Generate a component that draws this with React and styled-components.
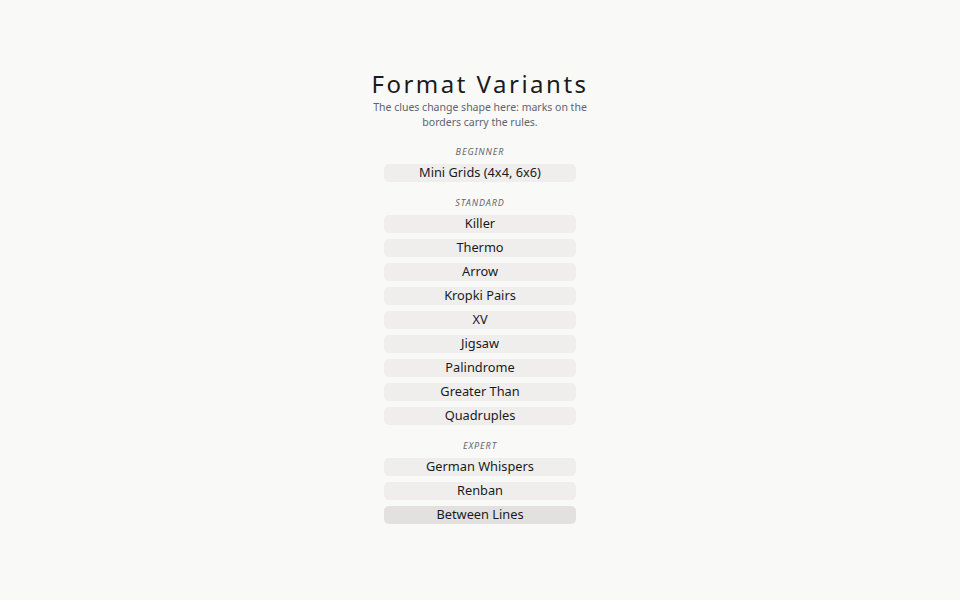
import React from 'react';
import styled, { createGlobalStyle } from 'styled-components';

const Global = createGlobalStyle`
  html, body {
    margin: 0;
    padding: 0;
    background: #f9f9f8;
    font-family: "Noto Sans", "Open Sans", sans-serif;
    color: #1d1d1f;
  }
`;

const Page = styled.main`
  display: flex;
  flex-direction: column;
  align-items: center;
  padding-top: 69px;
`;

const Title = styled.h1`
  margin: 0;
  font-size: 24px;
  line-height: 30px;
  font-weight: 400;
  letter-spacing: 2.5px;
  color: #1b1b1d;
`;

const Lead = styled.p`
  margin: 0;
  max-width: 220px;
  font-size: 10.5px;
  line-height: 15px;
  text-align: center;
  color: #5f6370;
  padding-top: 1px;
`;

const Section = styled.section`
  display: flex;
  flex-direction: column;
  align-items: center;
  gap: 6px;
  margin-top: ${(p) => (p.first ? '15px' : '14px')};
`;

const Label = styled.h2`
  margin: 1px 0 0;
  font-size: 9px;
  line-height: 12px;
  font-weight: 400;
  font-style: italic;
  letter-spacing: 0.9px;
  text-transform: uppercase;
  color: #66676c;
`;

const Item = styled.button`
  width: 192px;
  height: 18px;
  padding: 0 0 1px;
  border: none;
  border-radius: 5px;
  background: ${(p) => (p.active ? '#e2e1df' : '#efeeec')};
  font-family: inherit;
  font-size: 12.8px;
  font-weight: 400;
  line-height: 17px;
  color: #1a1a1e;
  cursor: pointer;
`;

const groups = [
  { name: 'Beginner', items: ['Mini Grids (4x4, 6x6)'] },
  {
    name: 'Standard',
    items: ['Killer', 'Thermo', 'Arrow', 'Kropki Pairs', 'XV', 'Jigsaw', 'Palindrome', 'Greater Than', 'Quadruples'],
  },
  { name: 'Expert', items: ['German Whispers', 'Renban', 'Between Lines'] },
];

export default function App() {
  return (
    <>
      <Global />
      <Page>
        <Title>Format Variants</Title>
        <Lead>The clues change shape here: marks on the borders carry the rules.</Lead>
        {groups.map((g, i) => (
          <Section key={g.name} first={i === 0}>
            <Label>{g.name}</Label>
            {g.items.map((it) => (
              <Item key={it} active={it === 'Between Lines'}>{it}</Item>
            ))}
          </Section>
        ))}
      </Page>
    </>
  );
}
